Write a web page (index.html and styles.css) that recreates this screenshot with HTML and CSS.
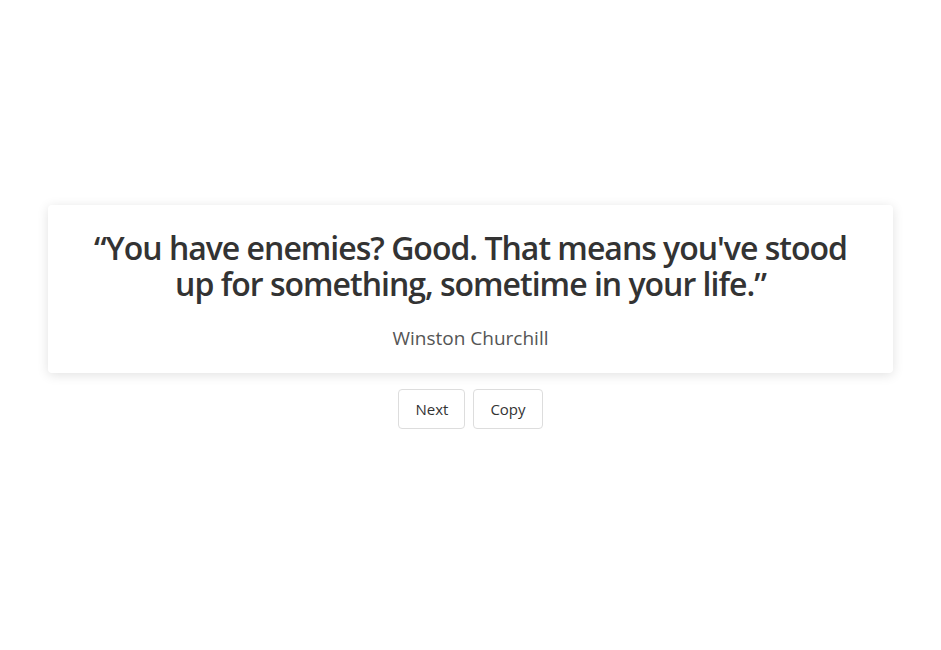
FILE: index.html
```html
<!DOCTYPE html>
<html lang="en">
<head>
<meta charset="utf-8">
<title>Quote</title>
<link rel="stylesheet" href="styles.css">
</head>
<body>
<main class="page">
  <section class="card">
    <p class="quote">“You have enemies? Good. That means you've stood up for something, sometime in your life.”</p>
    <p class="author">Winston Churchill</p>
  </section>
  <div class="actions">
    <button class="btn">Next</button>
    <button class="btn">Copy</button>
  </div>
</main>
</body>
</html>
```
FILE: styles.css
```css
html, body {
  margin: 0;
  padding: 0;
  background: #fff;
}
body {
  font-family: "Open Sans", "Noto Sans", "Liberation Sans", sans-serif;
  color: #333;
}
.page {
  min-height: 650px;
  box-sizing: border-box;
  display: flex;
  flex-direction: column;
  align-items: center;
  justify-content: center;
  padding: 0 48px 16px;
}
.card {
  align-self: stretch;
  background: #fff;
  border-radius: 4px;
  box-shadow: 0 2px 12px rgba(0, 0, 0, 0.12);
  padding: 25px 40px 21px;
  text-align: center;
}
.quote {
  margin: 0;
  font-size: 32px;
  line-height: 36px;
  font-weight: 600;
  letter-spacing: -1px;
  color: #333;
}
.author {
  margin: 23px 0 0;
  font-size: 19px;
  line-height: 27px;
  color: #555;
}
.actions {
  display: flex;
  gap: 8px;
  margin-top: 16px;
}
.btn {
  font-family: inherit;
  font-size: 15px;
  color: #333;
  background: #fff;
  border: 1px solid #ddd;
  border-radius: 4px;
  height: 40px;
  padding: 0 16px;
  cursor: pointer;
}
```
